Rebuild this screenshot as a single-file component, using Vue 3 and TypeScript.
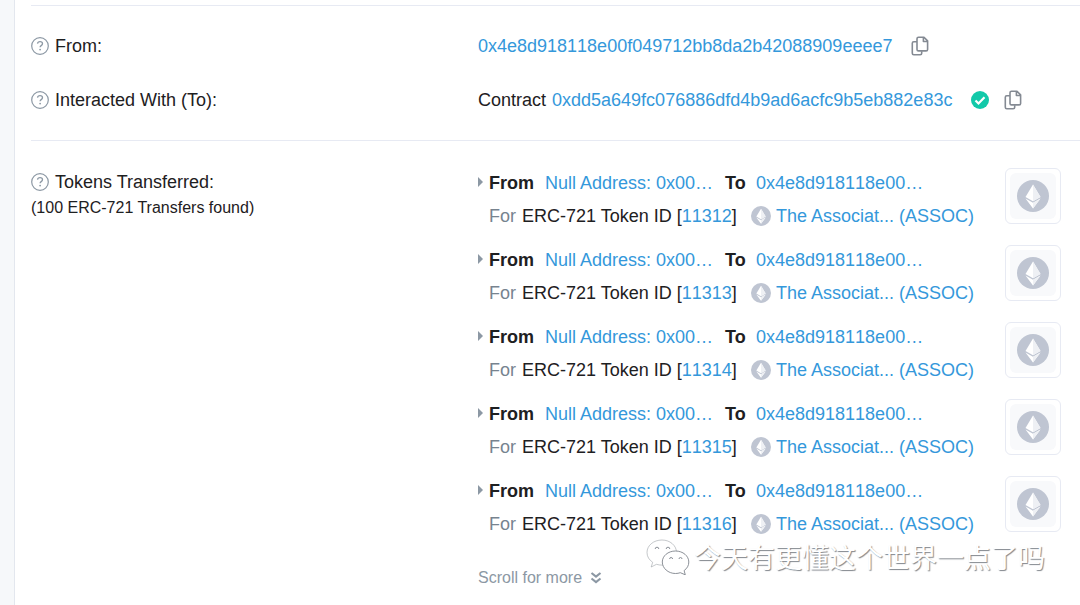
<script setup lang="ts">
interface Transfer {
  id: number
  from: string
  to: string
  token: string
}

const sender = '0x4e8d918118e00f049712bb8da2b42088909eeee7'
const contract = '0xdd5a649fc076886dfd4b9ad6acfc9b5eb882e83c'

const transfers: Transfer[] = [11312, 11313, 11314, 11315, 11316].map((id) => ({
  id,
  from: 'Null Address: 0x00…',
  to: '0x4e8d918118e00…',
  token: 'The Associat... (ASSOC)',
}))
</script>

<template>
  <svg class="symbols" aria-hidden="true">
    <symbol id="help" viewBox="0 0 18 18">
      <circle cx="9" cy="9" r="8.3" fill="none" stroke="#8c98a4" stroke-width="1.2" />
      <path d="M6.500 6.700C6.700 5.300 7.700 4.700 9 4.700c1.500 0 2.500.8 2.500 2.100 0 1.800-2.400 1.800-2.400 3.400" fill="none" stroke="#8c98a4" stroke-width="1.300" />
      <circle cx="9.100" cy="12.600" r=".9" fill="#8c98a4" />
    </symbol>
    <symbol id="copy" viewBox="0 0 18 20">
      <path d="M6 5.800H2.800Q1.300 5.800 1.300 7.300v9.900Q1.300 18.700 2.800 18.700h6.400q1.500 0 1.500-1.500v-2" fill="none" stroke="#848a93" stroke-width="1.600" />
      <path d="M7.500 1.300h5.500l3.600 3.600v8.500q0 1.500-1.500 1.500H7.500q-1.500 0-1.500-1.500V2.800q0-1.500 1.500-1.500zM12.400 1.500v4h4" fill="none" stroke="#848a93" stroke-width="1.600" stroke-linejoin="round" />
    </symbol>
    <symbol id="ether" viewBox="0 0 32 32">
      <circle cx="16" cy="16" r="16" fill="#bfc5d2" />
      <path d="M16 4.500L8.500 16.900 16 21.200l7.500-4.300z" fill="#fff" />
      <path d="M16 4.500v16.700l7.500-4.300z" fill="#eef0f4" />
      <path d="M8.500 18.400L16 22.700l7.500-4.300L16 28.500z" fill="#fff" />
      <path d="M16 22.700v5.800l7.500-10.100z" fill="#eef0f4" />
    </symbol>
  </svg>

  <main class="page">
    <section class="card">
      <div class="parties">
        <div class="row">
          <div class="label"><svg class="help"><use href="#help" /></svg>From:</div>
          <div class="value">
            <a class="hash" href="#from">{{ sender }}</a>
            <button class="copy" type="button" aria-label="Copy sender address"><svg><use href="#copy" /></svg></button>
          </div>
        </div>
        <div class="row">
          <div class="label"><svg class="help"><use href="#help" /></svg>Interacted With (To):</div>
          <div class="value">
            <span class="kind">Contract</span>
            <a class="hash" href="#contract">{{ contract }}</a>
            <svg class="verified" viewBox="0 0 18 18">
              <circle cx="9" cy="9" r="9" fill="#12c9a9" />
              <path d="M4.500 9.500l3 3 6-6.200" fill="none" stroke="#fff" stroke-width="2.200" />
            </svg>
            <button class="copy" type="button" aria-label="Copy contract address"><svg><use href="#copy" /></svg></button>
          </div>
        </div>
      </div>

      <div class="tokens">
        <div class="heading">
          <div class="label"><svg class="help"><use href="#help" /></svg>Tokens Transferred:</div>
          <div class="count">(100 ERC-721 Transfers found)</div>
        </div>
        <div>
          <ul class="list">
            <li v-for="item in transfers" :key="item.id" class="transfer">
              <svg class="caret" viewBox="0 0 5 10"><path d="M0 0l5 5-5 5z" fill="#8c98a4" /></svg>
              <div class="details">
                <div class="line">
                  <b class="from">From</b>
                  <a class="source" href="#from">{{ item.from }}</a>
                  <b class="to">To</b>
                  <a class="hash" href="#to">{{ item.to }}</a>
                </div>
                <div class="line">
                  <span class="for">For</span>
                  <span class="token-id">ERC-721 Token ID [<a class="hash" href="#id">{{ item.id }}</a>]</span>
                  <svg class="coin"><use href="#ether" /></svg>
                  <a href="#token">{{ item.token }}</a>
                </div>
              </div>
              <a class="thumb" href="#nft" aria-label="View token image">
                <span class="tile"><svg><use href="#ether" /></svg></span>
              </a>
            </li>
          </ul>
          <button class="more" type="button">
            Scroll for more
            <svg viewBox="0 0 12 12"><path d="M1.500 1L6 4.500 10.500 1M1.500 6.500L6 10l4.500-3.500" fill="none" stroke="#8c98a4" stroke-width="2.200" /></svg>
          </button>
        </div>
      </div>
    </section>

    <div class="watermark">
      <svg viewBox="0 0 44 36">
        <g fill="#fff" stroke="#7f858c" stroke-width=".9">
          <path d="M16 1C7.500 1 1 6.500 1 13.500c0 4.300 2.300 7.500 5.700 9.800L5.200 28l5.300-2.700c2 .6 3.500.8 5.500.8 8 0 14.500-5.600 14.500-12.600S24 1 16 1z" stroke-opacity=".5" />
          <path d="M29.500 12C22 12 16.300 17 16.300 23S22 34.500 29.500 34.500c1.700 0 3.400-.3 4.800-.8l5 2.100-1.200-4.200c3-2.200 4.700-5 4.700-8.600C42.800 17 37 12 29.500 12z" />
          <path d="M9.200 10a1.800 1.800 0 0 1 3.600 0M20.200 10a1.800 1.800 0 0 1 3.600 0M23.600 20a1.500 1.500 0 0 1 3 0M33 20a1.500 1.500 0 0 1 3 0" fill="none" />
        </g>
      </svg>
      <span>今天有更懂这个世界一点了吗</span>
    </div>
  </main>
</template>

<style>
body {
  margin: 0;
  background: #fff;
}
</style>

<style scoped>
* {
  box-sizing: border-box;
}

.symbols {
  position: absolute;
  width: 0;
  height: 0;
}

.page {
  position: relative;
  min-height: 100vh;
  display: flex;
  padding-left: 14px;
  overflow: hidden;
  background: #f6f8fa;
  color: #1e2022;
  font: 18px/27px "Liberation Sans", Arial, sans-serif;
}

.card {
  flex: 1;
  padding: 5px 0 0 16px;
  border-left: 1px solid #e3e7ee;
  background: #fff;
}

a {
  color: #3498db;
  text-decoration: none;
}

button {
  padding: 0;
  border: 0;
  background: none;
  font: inherit;
  cursor: pointer;
}

svg {
  display: block;
  flex: none;
}

.hash {
  font-kerning: none;
}

.parties {
  padding: 27px 0 26px;
  border-top: 1px solid #e7eaf3;
  border-bottom: 1px solid #e7eaf3;
  display: grid;
  gap: 27px;
}

.row,
.tokens {
  display: grid;
  grid-template-columns: 447px 1fr;
}

.label,
.value {
  display: flex;
  align-items: center;
}

.help {
  width: 18px;
  height: 18px;
  margin: 0 6px 2px 0;
}

.value .hash {
  margin-right: 19px;
}

.kind {
  margin-right: 6px;
}

.copy svg {
  width: 18px;
  height: 20px;
  margin-bottom: 2px;
}

.verified {
  width: 18px;
  height: 18px;
  margin: 0 15px 2px 0;
}

.tokens {
  padding-top: 27px;
}

.heading {
  padding-top: 1px;
}

.count {
  font-size: 16px;
  line-height: 24px;
}

.list {
  display: grid;
  gap: 11px;
  margin: 0;
  padding: 0;
  list-style: none;
}

.transfer {
  display: flex;
  align-items: flex-start;
  padding-right: 19px;
}

.caret {
  width: 5px;
  height: 10px;
  margin: 9px 6px 0 0;
}

.details {
  flex: 1;
}

.line {
  display: flex;
  align-items: center;
  height: 33px;
  padding-bottom: 2px;
  white-space: nowrap;
}

.from {
  width: 56px;
}

.source {
  width: 180px;
}

.to {
  width: 31px;
}

.for {
  width: 33px;
  color: #77838f;
}

.token-id {
  width: 229px;
}

.coin {
  width: 20px;
  height: 20px;
  margin: 0 5px 2px 0;
}

.thumb {
  padding: 4px;
  border: 1px solid #e7eaf3;
  border-radius: 6px;
}

.tile {
  display: grid;
  place-items: center;
  width: 46px;
  height: 46px;
  border-radius: 6px;
  background: #f8f9fb;
}

.tile svg {
  width: 32px;
  height: 32px;
}

.more {
  display: flex;
  align-items: center;
  gap: 8px;
  margin-top: 24px;
  color: #8c98a4;
  font-size: 16px;
  line-height: 24px;
}

.more svg {
  width: 12px;
  height: 12px;
}

.watermark {
  position: absolute;
  right: 35px;
  bottom: 30px;
  display: flex;
  align-items: center;
  gap: 4px;
  color: #fff;
  font: 27px/36px "Noto Sans CJK SC", sans-serif;
  text-shadow: 1px 1px 1px #82878d;
  white-space: nowrap;
  pointer-events: none;
}

.watermark svg {
  width: 44px;
  height: 36px;
}
</style>
